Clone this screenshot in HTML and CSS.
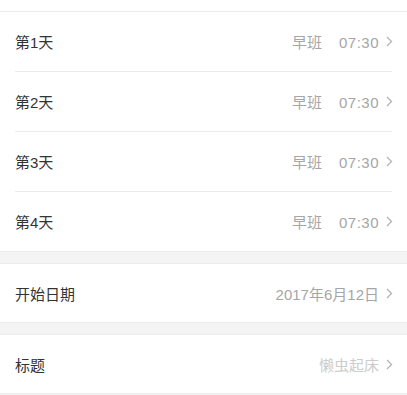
FILE: index.html
```html
<!DOCTYPE html>
<html lang="zh-CN">
<head>
<meta charset="utf-8">
<title>排班设置</title>
<link rel="stylesheet" href="styles.css">
</head>
<body>
<div class="top"></div>
<div class="group">
  <div class="cell">
    <span class="label">第1天</span>
    <span class="value"><span class="shift">早班</span><span class="time">07:30</span></span>
    <svg class="arrow" viewBox="0 0 7 11" width="7" height="11"><polyline points="1,1 5.5,5.5 1,10"/></svg>
  </div>
  <div class="cell">
    <span class="label">第2天</span>
    <span class="value"><span class="shift">早班</span><span class="time">07:30</span></span>
    <svg class="arrow" viewBox="0 0 7 11" width="7" height="11"><polyline points="1,1 5.5,5.5 1,10"/></svg>
  </div>
  <div class="cell">
    <span class="label">第3天</span>
    <span class="value"><span class="shift">早班</span><span class="time">07:30</span></span>
    <svg class="arrow" viewBox="0 0 7 11" width="7" height="11"><polyline points="1,1 5.5,5.5 1,10"/></svg>
  </div>
  <div class="cell">
    <span class="label">第4天</span>
    <span class="value"><span class="shift">早班</span><span class="time">07:30</span></span>
    <svg class="arrow" viewBox="0 0 7 11" width="7" height="11"><polyline points="1,1 5.5,5.5 1,10"/></svg>
  </div>
</div>
<div class="group">
  <div class="cell short">
    <span class="label">开始日期</span>
    <span class="value">2017年6月12日</span>
    <svg class="arrow" viewBox="0 0 7 11" width="7" height="11"><polyline points="1,1 5.5,5.5 1,10"/></svg>
  </div>
</div>
<div class="group">
  <div class="cell short">
    <span class="label">标题</span>
    <span class="value placeholder">懒虫起床</span>
    <svg class="arrow" viewBox="0 0 7 11" width="7" height="11"><polyline points="1,1 5.5,5.5 1,10"/></svg>
  </div>
</div>
</body>
</html>
```

FILE: styles.css
```css
html, body {
  margin: 0;
  padding: 0;
}
body {
  background: #f4f4f4;
  font-family: "Liberation Sans", "Noto Sans CJK SC", sans-serif;
  width: 407px;
  height: 395px;
  overflow: hidden;
}
.top {
  height: 11px;
  background: #fff;
  border-bottom: 1px solid #ececec;
}
.group {
  background: #fff;
  border-bottom: 1px solid #ececec;
}
.group + .group {
  margin-top: 11px;
  border-top: 1px solid #ececec;
}
.cell {
  position: relative;
  display: flex;
  align-items: center;
  height: 59px;
  padding: 0 14px 0 15px;
}
.cell.short {
  height: 58px;
}
.cell + .cell::before {
  content: "";
  position: absolute;
  left: 15px;
  right: 15px;
  top: -1px;
  height: 1px;
  background: #ececec;
}
.cell + .cell {
  margin-top: 1px;
}
.label {
  flex: 1;
  font-size: 15px;
  color: #333;
}
.value {
  font-size: 15px;
  color: #a6a6a6;
}
.value.placeholder {
  color: #cccccc;
}
.shift {
  margin-right: 17px;
}
.time {
  letter-spacing: 0.5px;
}
.arrow {
  margin-left: 7px;
  fill: none;
  stroke: #b4b4b4;
  stroke-width: 1.3;
}
```
